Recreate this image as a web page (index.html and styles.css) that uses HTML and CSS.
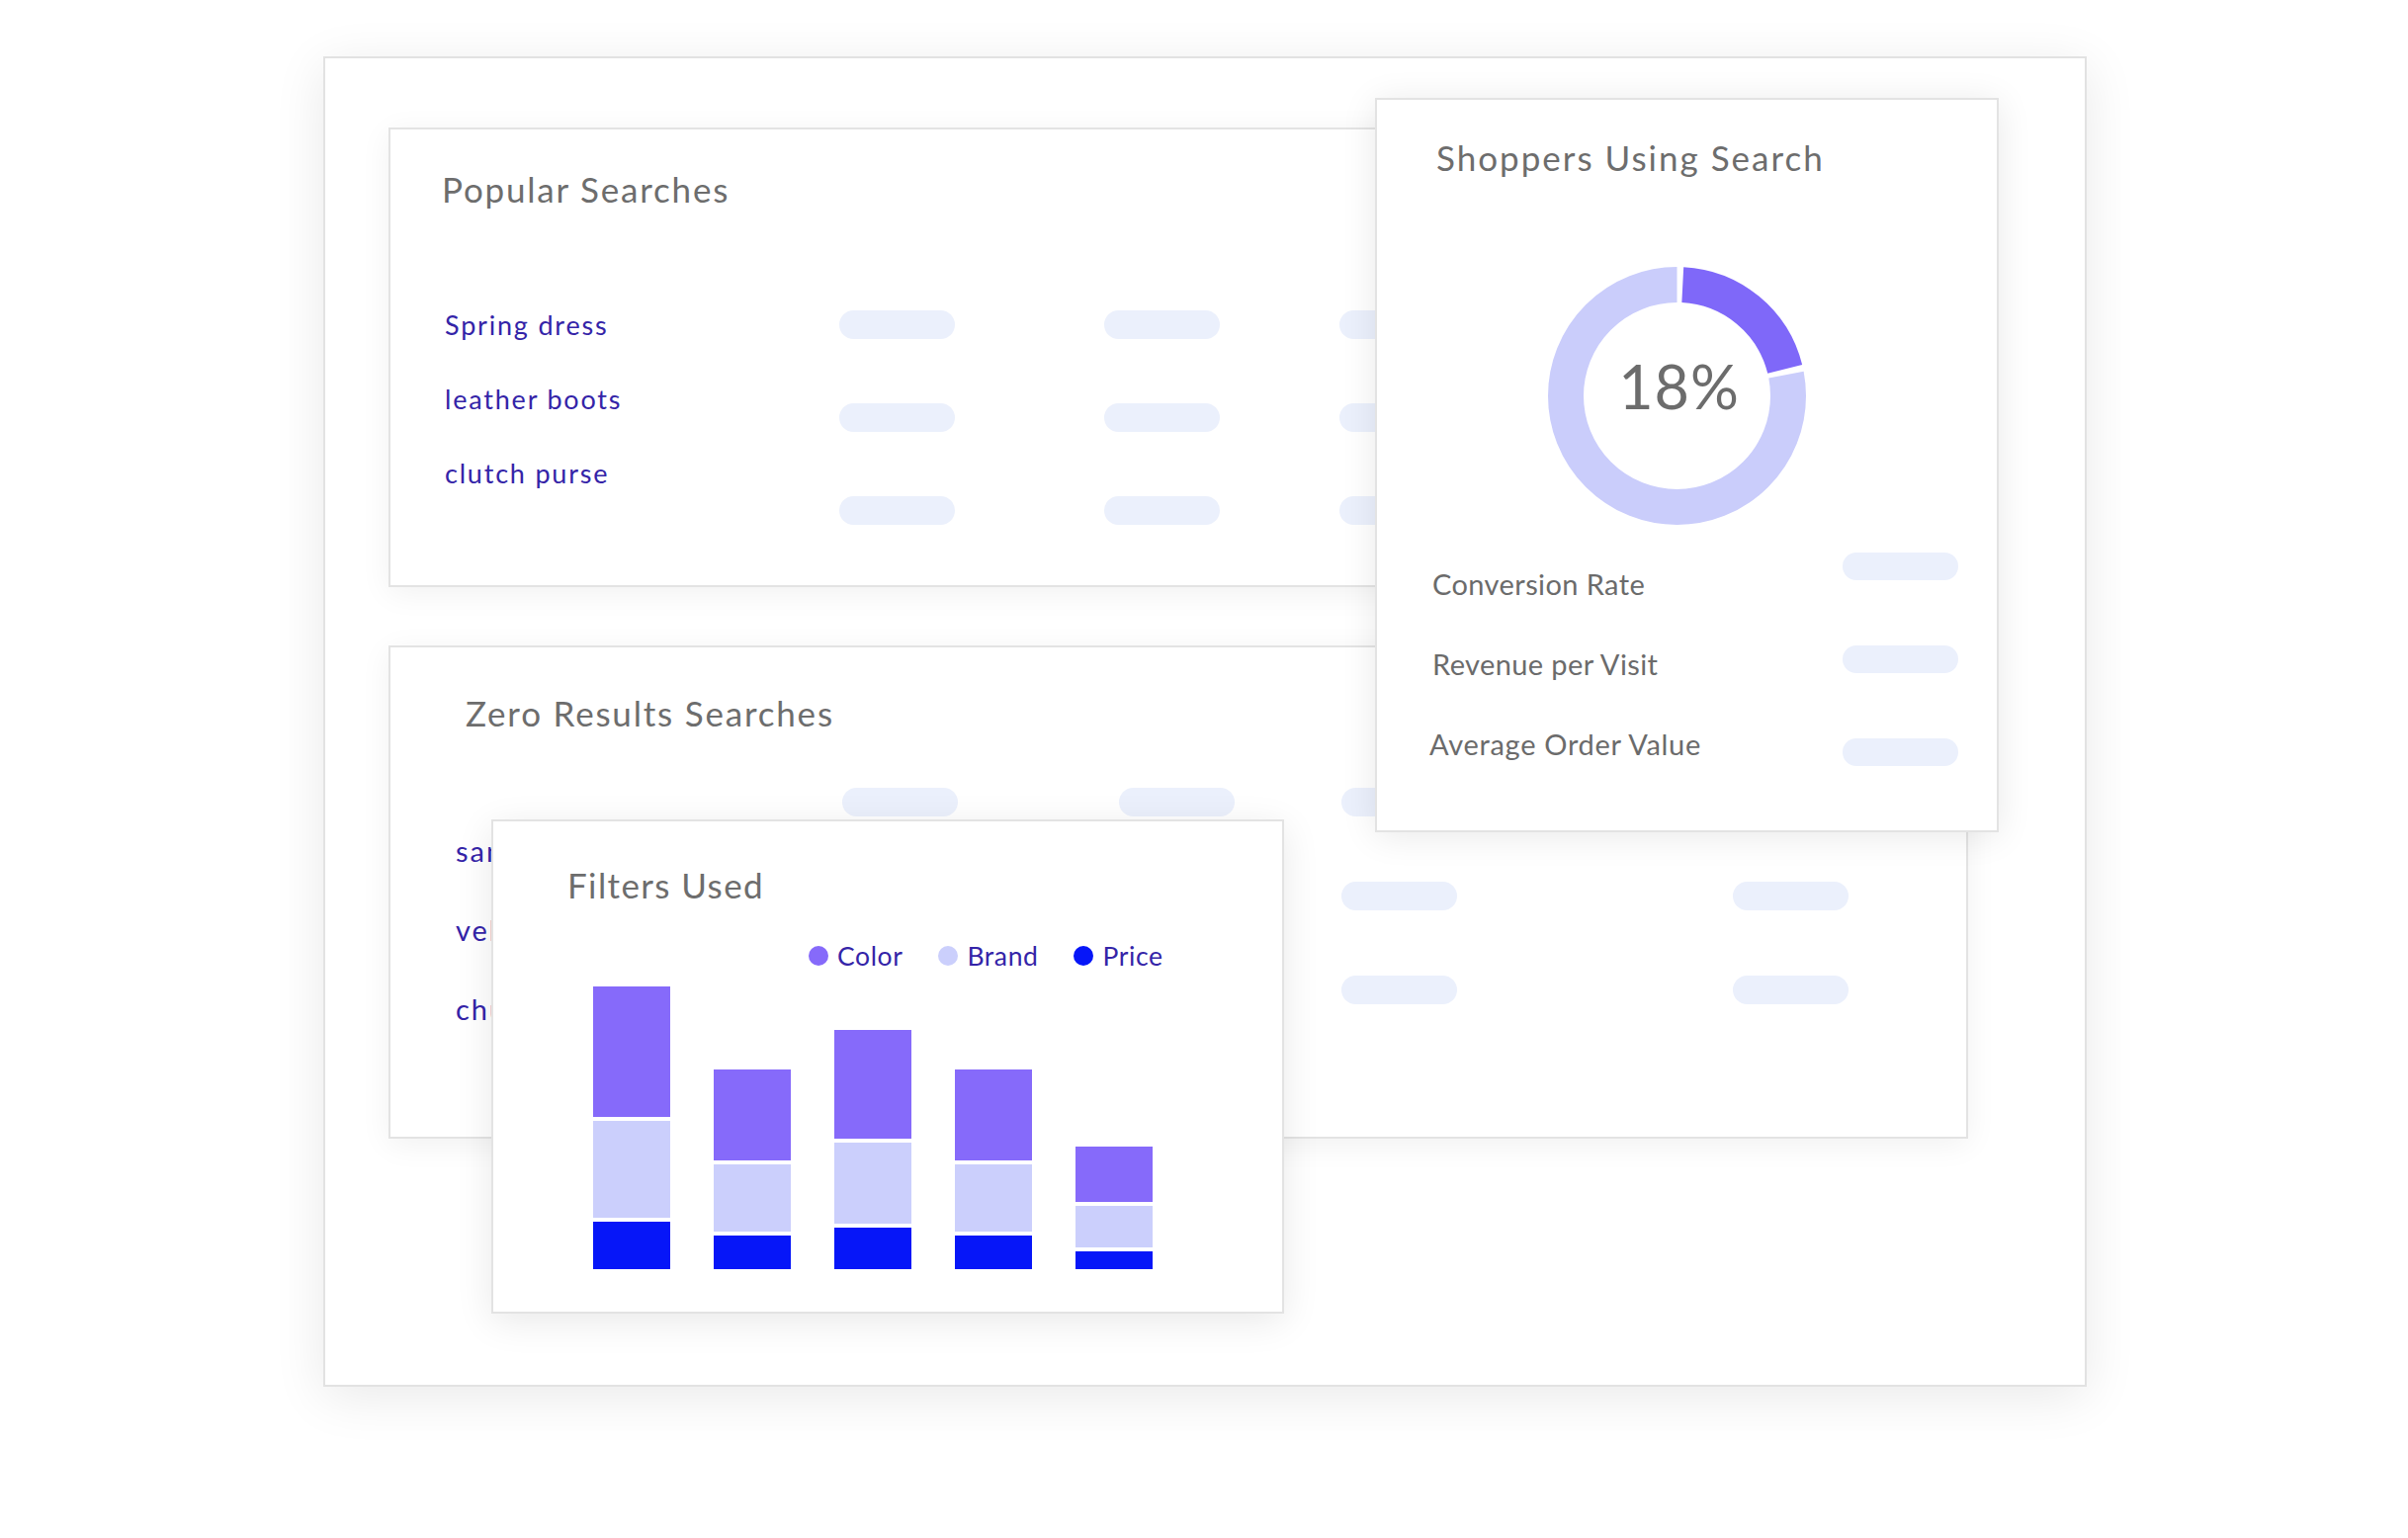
FILE: index.html
```html
<!DOCTYPE html>
<html lang="en">
<head>
<meta charset="utf-8">
<title>Search Analytics</title>
<link rel="stylesheet" href="styles.css">
</head>
<body>
<div class="page">
  <div class="board">
    <section class="card popular">
      <h2 class="title">Popular Searches</h2>
      <div class="grid popular-grid">
        <ul class="links">
          <li>Spring dress</li>
          <li>leather boots</li>
          <li>clutch purse</li>
        </ul>
        <div class="pills"><span class="pill"></span><span class="pill"></span><span class="pill"></span></div>
        <div class="pills"><span class="pill"></span><span class="pill"></span><span class="pill"></span></div>
        <div class="pills"><span class="pill"></span><span class="pill"></span><span class="pill"></span></div>
        <div class="pills"><span class="pill"></span><span class="pill"></span><span class="pill"></span></div>
      </div>
    </section>

    <section class="card zero">
      <h2 class="title">Zero Results Searches</h2>
      <div class="grid zero-grid">
        <ul class="links">
          <li>sandals</li>
          <li>velvet blazer</li>
          <li>chunky sneakers</li>
        </ul>
        <div class="pills"><span class="pill"></span><span class="pill"></span><span class="pill"></span></div>
        <div class="pills"><span class="pill"></span><span class="pill"></span><span class="pill"></span></div>
        <div class="pills"><span class="pill"></span><span class="pill"></span><span class="pill"></span></div>
        <div class="pills"><span class="pill"></span><span class="pill"></span><span class="pill"></span></div>
      </div>
    </section>

    <section class="card shoppers">
      <h2 class="title">Shoppers Using Search</h2>
      <div class="donut">
        <svg width="261" height="261" viewBox="0 0 261 261" aria-hidden="true">
          <defs>
            <linearGradient id="pg" x1="130" y1="18" x2="250" y2="120" gradientUnits="userSpaceOnUse">
              <stop offset="0" stop-color="#9c66fd"/>
              <stop offset="1" stop-color="#7f68f9"/>
            </linearGradient>
          </defs>
          <g transform="rotate(-90 130.5 130.5)">
            <circle cx="130.5" cy="130.5" r="112.5" fill="none" stroke="#cacdfb" stroke-width="36"
              stroke-dasharray="551.7 706.9" stroke-dashoffset="-155.1"/>
            <circle cx="130.5" cy="130.5" r="112.5" fill="none" stroke="url(#pg)" stroke-width="36"
              stroke-dasharray="143.3 706.9" stroke-dashoffset="-5.9"/>
          </g>
        </svg>
        <span class="percent">18%</span>
      </div>
      <div class="metrics">
        <ul class="metric-labels">
          <li>Conversion Rate</li>
          <li>Revenue per Visit</li>
          <li>Average Order Value</li>
        </ul>
        <div class="pills metric-pills"><span class="pill"></span><span class="pill"></span><span class="pill"></span></div>
      </div>
    </section>

    <section class="card filters">
      <h2 class="title">Filters Used</h2>
      <ul class="legend">
        <li><span class="dot c-color"></span>Color</li>
        <li><span class="dot c-brand"></span>Brand</li>
        <li><span class="dot c-price"></span>Price</li>
      </ul>
      <div class="chart">
        <div class="bar"><span class="seg c-color" style="height:132px"></span><span class="seg c-brand" style="height:98px"></span><span class="seg c-price" style="height:48px"></span></div>
        <div class="bar"><span class="seg c-color" style="height:92px"></span><span class="seg c-brand" style="height:68px"></span><span class="seg c-price" style="height:34px"></span></div>
        <div class="bar"><span class="seg c-color" style="height:110px"></span><span class="seg c-brand" style="height:82px"></span><span class="seg c-price" style="height:42px"></span></div>
        <div class="bar"><span class="seg c-color" style="height:92px"></span><span class="seg c-brand" style="height:68px"></span><span class="seg c-price" style="height:34px"></span></div>
        <div class="bar"><span class="seg c-color" style="height:56px"></span><span class="seg c-brand" style="height:42px"></span><span class="seg c-price" style="height:18px"></span></div>
      </div>
    </section>
  </div>
</div>
</body>
</html>
```

FILE: styles.css
```css
* { box-sizing: border-box; }

html, body {
  margin: 0;
  padding: 0;
  background: #ffffff;
}

body {
  font-family: "Lato", "Open Sans", "DejaVu Sans", sans-serif;
  color: #6b6b6b;
}

ul { list-style: none; margin: 0; padding: 0; }
h2 { margin: 0; font-weight: 400; }

.page {
  padding: 57px 0 0 327px;
  width: 2436px;
  height: 1556px;
}

.board {
  position: relative;
  width: 1784px;
  height: 1346px;
  background: #fff;
  border: 2px solid #e2e2e2;
  box-shadow: 0 10px 50px rgba(0, 0, 0, 0.09);
  padding: 70px 0 0 64px;
}

.card {
  background: #fff;
  border: 2px solid #e3e3e3;
  box-shadow: 0 6px 30px rgba(0, 0, 0, 0.06);
}

.title {
  font-size: 35px;
  line-height: 34px;
  color: #6d6d6d;
  letter-spacing: 1.8px;
  white-space: nowrap;
}

.links li {
  font-size: 27px;
  color: #3424a8;
  letter-spacing: 1.8px;
  white-space: nowrap;
}

.pills {
  display: flex;
  flex-direction: column;
}

.pill {
  display: block;
  width: 117px;
  height: 29px;
  border-radius: 15px;
  background: #ebf0fc;
}

.grid { display: grid; align-items: start; }

/* Popular searches */
.popular {
  width: 1598px;
  height: 465px;
  padding: 43px 0 0 52px;
}
.popular-grid {
  margin-top: 83px;
  grid-template-columns: 402px 268px 238px 398px 117px;
}
.popular .links { margin-left: 3px; }
.popular .links li { line-height: 75px; }
.popular .pills { padding-top: 23px; gap: 65px; }

/* Zero results */
.zero {
  width: 1598px;
  height: 499px;
  margin-top: 59px;
  padding: 49px 0 0 66px;
}
.zero .title { margin-left: 10px; }
.zero-grid {
  margin-top: 59px;
  grid-template-columns: 391px 280px 225px 396px 117px;
}
.zero .links { padding-top: 24px; }
.zero .links li { font-size: 29px; line-height: 80px; letter-spacing: 2px; }
.zero .pills { gap: 66px; }

/* Shoppers using search */
.shoppers {
  position: absolute;
  left: 1062px;
  top: 40px;
  width: 631px;
  height: 743px;
  padding: 41px 39px 0 56px;
  box-shadow: 0 4px 34px rgba(0, 0, 0, 0.09);
}
.shoppers .title { margin-left: 4px; letter-spacing: 2px; }

.donut {
  position: relative;
  width: 261px;
  height: 261px;
  margin: 94px 0 0 117px;
  display: flex;
  align-items: center;
  justify-content: center;
}
.donut svg { position: absolute; left: 0; top: 0; }
.percent {
  position: relative;
  font-size: 61px;
  line-height: 61px;
  color: #6c6c6c;
  margin: 0 0 20px 4px;
  letter-spacing: 1px;
}

.metrics {
  display: flex;
  justify-content: space-between;
  align-items: flex-start;
  margin-top: 19px;
}
.metric-labels li {
  font-size: 29px;
  line-height: 81px;
  color: #6b6b6b;
  letter-spacing: 0.4px;
  white-space: nowrap;
}
.metric-labels li:last-child { margin-left: -3px; letter-spacing: 0.7px; }
.metric-pills { padding-top: 9px; gap: 66px; }
.metric-pills .pill { height: 28px; border-radius: 14px; }

/* Filters used */
.filters {
  position: absolute;
  left: 168px;
  top: 770px;
  width: 802px;
  height: 500px;
  padding: 47px 0 0 75px;
  box-shadow: 0 8px 36px rgba(0, 0, 0, 0.09);
}
.filters .title { letter-spacing: 1.4px; }

.legend {
  display: flex;
  gap: 36px;
  margin-top: 42px;
  padding-left: 244px;
}
.legend li {
  display: flex;
  align-items: center;
  gap: 9px;
  font-size: 26.5px;
  line-height: 26.5px;
  color: #3424a8;
  letter-spacing: 0.6px;
}
.dot {
  width: 20px;
  height: 20px;
  border-radius: 50%;
  display: block;
}

.chart {
  display: flex;
  align-items: flex-end;
  gap: 44px;
  height: 290px;
  margin: 13px 0 0 26px;
}
.bar {
  width: 78px;
  display: flex;
  flex-direction: column;
  gap: 4px;
}
.seg { display: block; width: 78px; }

.c-color { background: #866afa; }
.c-brand { background: #cbcffc; }
.c-price { background: #0616f8; }
```
